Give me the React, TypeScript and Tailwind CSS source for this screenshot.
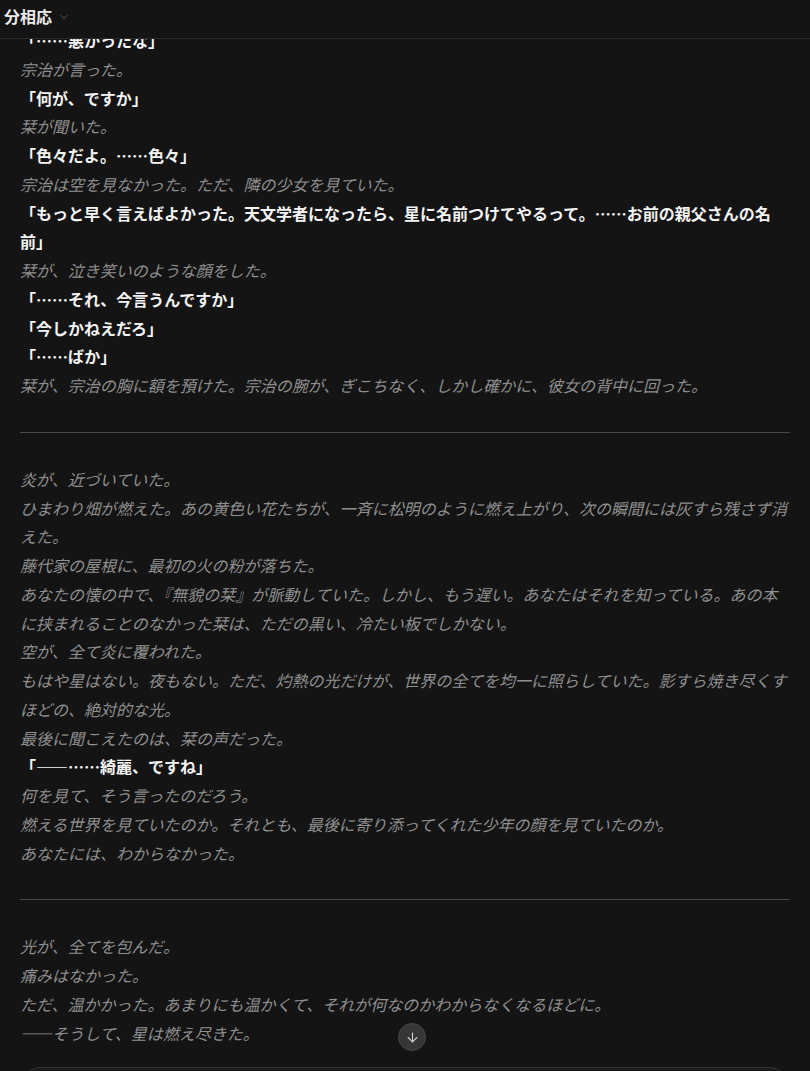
import { ChevronDown, ArrowDown } from "lucide-react"

type Line = { text: string; speech?: boolean }

const sections: Line[][] = [
  [
    { text: "「……悪かったな」", speech: true },
    { text: "宗治が言った。" },
    { text: "「何が、ですか」", speech: true },
    { text: "栞が聞いた。" },
    { text: "「色々だよ。……色々」", speech: true },
    { text: "宗治は空を見なかった。ただ、隣の少女を見ていた。" },
    {
      text: "「もっと早く言えばよかった。天文学者になったら、星に名前つけてやるって。……お前の親父さんの名前」",
      speech: true,
    },
    { text: "栞が、泣き笑いのような顔をした。" },
    { text: "「……それ、今言うんですか」", speech: true },
    { text: "「今しかねえだろ」", speech: true },
    { text: "「……ばか」", speech: true },
    { text: "栞が、宗治の胸に額を預けた。宗治の腕が、ぎこちなく、しかし確かに、彼女の背中に回った。" },
  ],
  [
    { text: "炎が、近づいていた。" },
    { text: "ひまわり畑が燃えた。あの黄色い花たちが、一斉に松明のように燃え上がり、次の瞬間には灰すら残さず消えた。" },
    { text: "藤代家の屋根に、最初の火の粉が落ちた。" },
    {
      text: "あなたの懐の中で、『無貌の栞』が脈動していた。しかし、もう遅い。あなたはそれを知っている。あの本に挟まれることのなかった栞は、ただの黒い、冷たい板でしかない。",
    },
    { text: "空が、全て炎に覆われた。" },
    {
      text: "もはや星はない。夜もない。ただ、灼熱の光だけが、世界の全てを均一に照らしていた。影すら焼き尽くすほどの、絶対的な光。",
    },
    { text: "最後に聞こえたのは、栞の声だった。" },
    { text: "「——……綺麗、ですね」", speech: true },
    { text: "何を見て、そう言ったのだろう。" },
    { text: "燃える世界を見ていたのか。それとも、最後に寄り添ってくれた少年の顔を見ていたのか。" },
    { text: "あなたには、わからなかった。" },
  ],
  [
    { text: "光が、全てを包んだ。" },
    { text: "痛みはなかった。" },
    { text: "ただ、温かかった。あまりにも温かくて、それが何なのかわからなくなるほどに。" },
    { text: "——そうして、星は燃え尽きた。" },
  ],
]

export default function App() {
  return (
    <div
      lang="ja"
      className="h-[1071px] overflow-hidden flex flex-col bg-[#141414] font-['Noto_Sans_CJK_JP','Noto_Sans',sans-serif]"
    >
      {/* header */}
      <div className="h-[39px] shrink-0 flex items-start gap-[6px] px-[4px] pt-[5px] bg-[#141414] border-b border-[#2a2a2a] relative z-10">
        <span className="text-[16px] leading-[22px] font-bold text-[#ececec]">分相応</span>
        <ChevronDown size={12} strokeWidth={2} className="text-[#5e5e5e] mt-[6px]" />
      </div>

      {/* story */}
      <div className="h-[1028px] shrink-0 overflow-hidden relative">
        <div className="mt-[-13px] px-[20px] text-[16px] leading-[28.75px]">
          {sections.map((lines, i) => (
            <div key={i}>
              {i > 0 && <hr className="my-8 border-0 border-t border-[#4a4a4a]" />}
              {lines.map((l, j) =>
                l.speech ? (
                  <p key={j} className="font-bold text-[#f4f4f4]">
                    {l.text}
                  </p>
                ) : (
                  <p key={j} className="italic text-[#8f8f8f]">
                    {l.text}
                  </p>
                )
              )}
            </div>
          ))}
        </div>

        <button className="absolute left-[398px] bottom-[16px] w-[28px] h-[28px] rounded-full bg-[#363636] border border-[#474747] flex items-center justify-center text-[#cfcfcf]">
          <ArrowDown size={15} strokeWidth={1.75} />
        </button>
      </div>

      {/* composer */}
      <div className="px-[22px] shrink-0">
        <div className="h-[80px] rounded-[18px] border border-[#333333] bg-[#1a1a1a]" />
      </div>
    </div>
  )
}
